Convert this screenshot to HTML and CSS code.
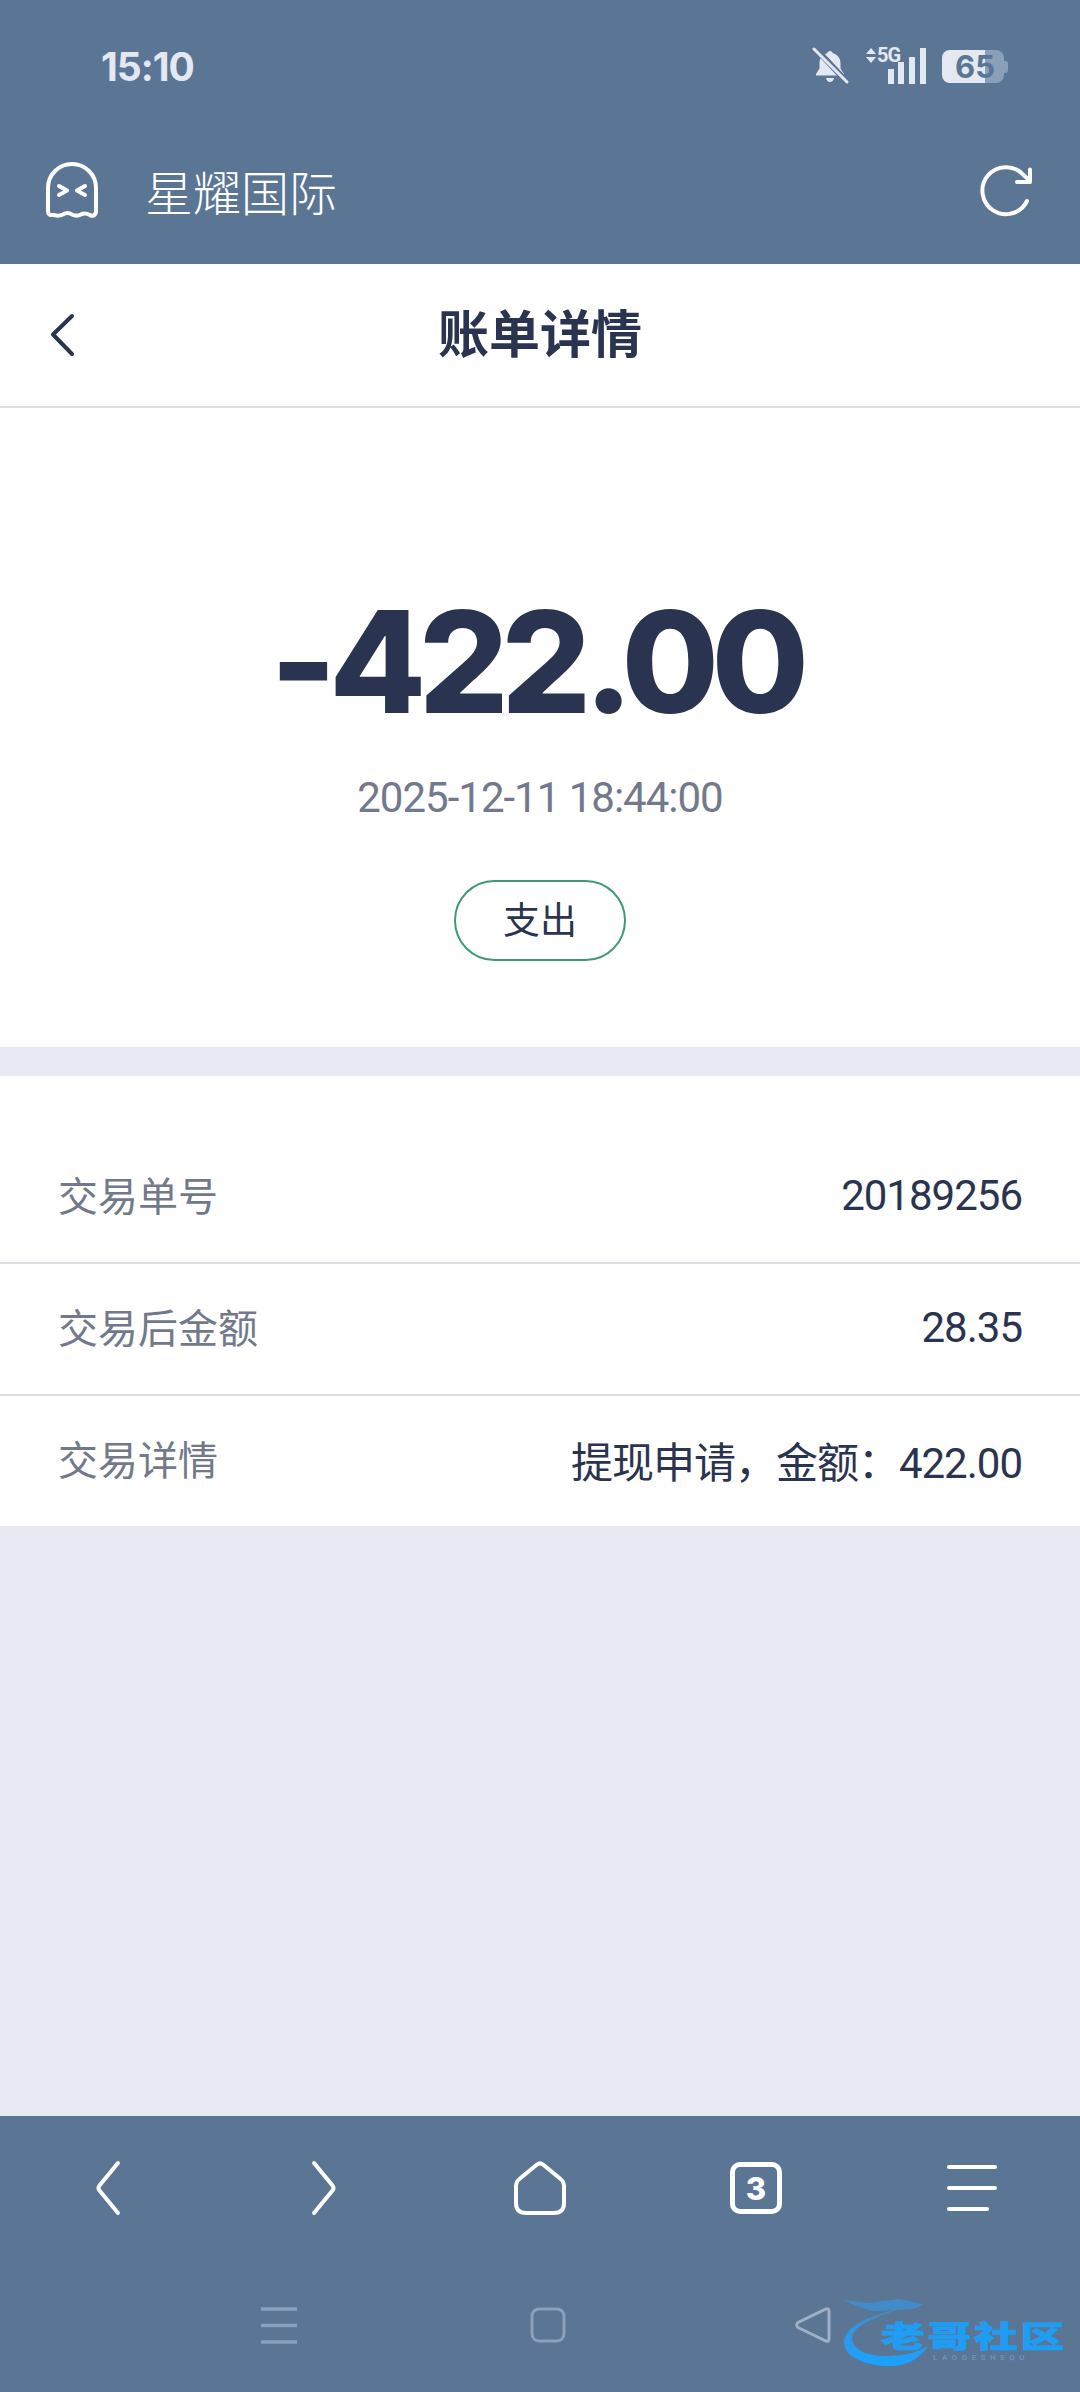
FILE: index.html
```html
<!DOCTYPE html>
<html lang="zh">
<head>
<meta charset="utf-8">
<title>账单详情</title>
<link rel="stylesheet" href="styles.css">
</head>
<body>
<div class="page">
  <header class="top">
    <div class="status">
      <span class="clock">15:10</span>
      <div class="status-icons">
        <svg class="bell" width="38" height="38" viewBox="0 0 38 38"><path d="M19 4c1.500 0 2.600 1 2.800 2.300 5 1.300 7.700 5 7.700 10.200v5l3.500 5.500v1.500H5v-1.500l3.500-5.500v-5c0-5.200 2.700-8.900 7.700-10.200C16.400 5 17.500 4 19 4z" fill="#e3e8f1"/><path d="M15 31h8c-.5 2.500-2 4-4 4s-3.500-1.500-4-4z" fill="#e3e8f1"/><path d="M4 1l33 35" stroke="#5b7595" stroke-width="6"/><path d="M3 2l33 33" stroke="#e3e8f1" stroke-width="3" stroke-linecap="round"/></svg>
        <div class="signal">
          <svg class="arrows" width="12" height="15" viewBox="0 0 12 15"><path d="M6 0l5 6H1zM6 15l5-6H1z" fill="#e3e8f1"/></svg>
          <span class="fiveg">5G</span>
          <span class="bar bar1"></span><span class="bar bar2"></span><span class="bar bar3"></span><span class="bar bar4"></span>
        </div>
        <div class="battery"><span class="battery-level"></span><span class="battery-tip"></span><span class="battery-num">65</span></div>
      </div>
    </div>
    <div class="appbar">
      <svg class="ghost" width="56" height="60" viewBox="0 0 56 60"><path d="M4 50V27A24 24 0 0 1 52 27v23c0 4-3 6-6 4-3-1.500-6-2.500-9-.5-3 1.500-6 1.500-9 0-3-2-6-2-9 0-3 1.500-6 1.500-9 .5C5 54.500 4 53 4 50z" fill="none" stroke="#fff" stroke-width="4" stroke-linejoin="round"/><path d="M15 25l8 4.500-8 4.500M41 25l-8 4.500 8 4.500" fill="none" stroke="#fff" stroke-width="4" stroke-linecap="round" stroke-linejoin="round"/></svg>
      <span class="appname">星耀国际</span>
      <svg class="reload" width="54" height="54" viewBox="0 0 54 54"><path d="M47 37A23.500 23.500 0 1 1 43 10.500L48 15" fill="none" stroke="#fff" stroke-width="4" stroke-linecap="round"/><path d="M50 5.500v12.500H37" fill="none" stroke="#fff" stroke-width="4" stroke-linecap="round" stroke-linejoin="round"/></svg>
    </div>
  </header>

  <nav class="titlebar">
    <svg class="back" width="28" height="44" viewBox="0 0 28 44"><path d="M23 3L4 21.500 23 41" fill="none" stroke="#2a3450" stroke-width="4" stroke-linecap="round" stroke-linejoin="round"/></svg>
    <h1 class="title">账单详情</h1>
  </nav>

  <section class="hero">
    <div class="amount">-422.00</div>
    <div class="time">2025-12-11 18:44:00</div>
    <div class="tag">支出</div>
  </section>

  <section class="list">
    <div class="row"><span class="label">交易单号</span><span class="value">20189256</span></div>
    <div class="row"><span class="label">交易后金额</span><span class="value">28.35</span></div>
    <div class="row"><span class="label">交易详情</span><span class="value">提现申请，金额：422.00</span></div>
  </section>

  <div class="spacer"></div>

  <footer class="bottom">
    <div class="toolbar">
      <svg width="30" height="56" viewBox="0 0 30 56"><path d="M25 3L6.500 25.500q-2 2.500 0 5L25 53" fill="none" stroke="#fff" stroke-width="4" stroke-linecap="round"/></svg>
      <svg width="30" height="56" viewBox="0 0 30 56"><path d="M5 3l18.500 22.500q2 2.500 0 5L5 53" fill="none" stroke="#fff" stroke-width="4" stroke-linecap="round"/></svg>
      <svg width="52" height="54" viewBox="0 0 52 54"><path d="M23 3.500q3-2.300 6 0l17 14q4 3 4 7.500V42q0 10-10 10H12Q2 52 2 42V25q0-4.500 4-7.500z" fill="none" stroke="#fff" stroke-width="4"/></svg>
      <div class="tabs">3</div>
      <svg width="50" height="48" viewBox="0 0 50 48"><path d="M2 3h46M2 24h46M2 45h38" fill="none" stroke="#fff" stroke-width="4" stroke-linecap="round"/></svg>
    </div>
    <div class="sysnav">
      <svg width="38" height="38" viewBox="0 0 38 38"><path d="M1 3h36M1 19.500h36M1 36h36" stroke="#8ba0ba" stroke-width="3.500" fill="none"/></svg>
      <svg width="36" height="36" viewBox="0 0 36 36"><rect x="2" y="2" width="32" height="32" rx="7" fill="none" stroke="#8ba0ba" stroke-width="3"/></svg>
      <svg class="sys-back" width="38" height="38" viewBox="0 0 38 38"><path d="M5 16.500a3 3 0 0 0 0 5L33 35q3 1 3-2V5q0-3-3-2z" fill="none" stroke="#9db0c6" stroke-width="3"/></svg>
    </div>
    <div class="mark">
      <svg class="mark-arc" width="100" height="74" viewBox="0 0 100 74"><defs><linearGradient id="markfade" x1="0" y1="0" x2="0" y2="1"><stop offset="0" stop-color="#3d8fd2"/><stop offset="1" stop-color="#1aa3ff"/></linearGradient></defs><path d="M3 4l26 3 30-4 24 5-9 5-16 1-26 1-18-6z" fill="#3d8fd2" opacity=".85"/><path d="M60 13C26 20 4 32 4 46c0 16 24 24 46 24 16 0 30-7 38-20-13 8-28 10-43 10-20 0-33-8-33-18 0-10 16-19 48-29z" fill="url(#markfade)"/></svg>
      <span class="mark-text">老哥社区</span>
      <span class="mark-sub">LAOGESHEQU</span>
    </div>
  </footer>
</div>
</body>
</html>
```

FILE: styles.css
```css
* { box-sizing: border-box; }
html, body { margin: 0; padding: 0; }
body {
  font-family: "Roboto", "Noto Sans CJK SC", sans-serif;
  background: #e7eaf3;
}
.page {
  width: 1080px;
  height: 2392px;
  display: flex;
  flex-direction: column;
  overflow: hidden;
}
.top {
  height: 264px;
  background: #5b7595;
  display: flex;
  flex-direction: column;
}
.status {
  height: 132px;
  display: flex;
  align-items: center;
  justify-content: space-between;
  padding: 0 72px 0 101px;
}
.clock {
  font-family: "Inter", sans-serif;
  font-size: 39px;
  font-weight: 700;
  color: #e3e8f1;
  letter-spacing: -1px;
}
.status-icons { display: flex; align-items: flex-start; gap: 16px; }
.signal { position: relative; width: 61px; height: 36px; margin-top: 1px; }
.arrows { position: absolute; left: 0; top: 0; }
.fiveg {
  position: absolute; left: 12px; top: -6px;
  font: 700 20px/26px "Roboto", sans-serif;
  color: #e3e8f1;
  letter-spacing: -1px;
}
.bar { position: absolute; bottom: 0; width: 6px; background: #e3e8f1; }
.bar1 { left: 23px; height: 15px; }
.bar2 { left: 33px; height: 22px; }
.bar3 { left: 44px; height: 27px; }
.bar4 { left: 55px; height: 36px; }
.battery { position: relative; width: 66px; height: 33px; margin-top: 3px; }
.battery::before {
  content: "";
  position: absolute; inset: 0 4px 0 0;
  background: #8a9fba;
  border-radius: 8px;
}
.battery-level {
  position: absolute; left: 0; top: 0; width: 43px; height: 33px;
  background: #e3e8f1;
  border-radius: 8px 0 0 8px;
}
.battery-tip {
  position: absolute; right: 0; top: 11px; width: 4px; height: 12px;
  background: #8a9fba;
  border-radius: 0 3px 3px 0;
}
.battery-num {
  position: absolute; left: 13px; top: 0;
  font: 700 31px/33px "Inter", sans-serif;
  color: #5b7595;
}
.appbar {
  height: 124px;
  display: flex;
  align-items: center;
  padding: 0 0 6px 44px;
}
.appname {
  font-size: 48px;
  font-weight: 300;
  font-family: "Noto Sans CJK SC", sans-serif;
  color: #fff;
  margin: 0 0 2px 45px;
}
.reload { margin-left: auto; margin-right: 46px; }
.titlebar {
  height: 144px;
  padding-bottom: 8px;
  background: #fff;
  border-bottom: 2px solid #dcdee3;
  display: flex;
  align-items: center;
  justify-content: center;
  position: relative;
}
.back { position: absolute; left: 49px; top: 49px; }
.title {
  margin: 0;
  font: 700 51px/1 "Noto Sans CJK SC", sans-serif;
  color: #2a3450;
}
.hero {
  height: 639px;
  background: #fff;
  display: flex;
  flex-direction: column;
  align-items: center;
  padding-top: 164px;
}
.amount {
  font-family: "Inter", sans-serif;
  font-size: 141px;
  font-weight: 800;
  line-height: 180px;
  letter-spacing: -7.500px;
  margin-right: 8px;
  color: #2a3450;
}
.time {
  margin-top: 21px;
  font-size: 42px;
  line-height: 50px;
  color: #72798b;
  letter-spacing: -1px;
}
.tag {
  margin-top: 57px;
  width: 172px;
  height: 81px;
  padding-bottom: 4px;
  border: 2px solid #3f9a73;
  border-radius: 41px;
  display: flex;
  align-items: center;
  justify-content: center;
  font: 400 37px/1 "Noto Sans CJK SC", sans-serif;
  color: #2a3450;
}
.list {
  margin-top: 29px;
  background: #fff;
  padding-top: 56px;
}
.row {
  height: 132px;
  padding: 0 58px 6px;
  display: flex;
  align-items: center;
  justify-content: space-between;
  font-size: 40px;
  border-bottom: 2px solid #dcdee3;
}
.row:last-child { border-bottom: 0; height: 130px; }
.label {
  color: #72798b;
  font-family: "Noto Sans CJK SC", sans-serif;
  font-weight: 400;
}
.value {
  padding-top: 2px;
  color: #2a3450;
  font-family: "Roboto", "Noto Sans CJK SC", sans-serif;
  font-weight: 400;
  font-size: 42px;
  letter-spacing: -1px;
}
.spacer { flex: 1; }
.bottom {
  position: relative;
  height: 276px;
  background: #5b7595;
}
.toolbar {
  height: 142px;
  padding-top: 2px;
  display: grid;
  grid-template-columns: repeat(5, 216px);
  justify-items: center;
  align-items: center;
}
.tabs {
  width: 52px;
  height: 52px;
  border: 5px solid #fff;
  border-radius: 10px;
  display: flex;
  align-items: center;
  justify-content: center;
  font: 800 31px/1 "Inter", sans-serif;
  color: #fff;
}
.sysnav {
  display: flex;
  align-items: center;
  gap: 232px;
  padding: 48px 0 0 260px;
}
.sys-back { margin-left: -5px; }
.mark {
  position: absolute;
  left: 840px;
  top: 180px;
  width: 230px;
  height: 74px;
}
.mark-arc { position: absolute; left: 0; top: 0; }
.mark-text {
  position: absolute; left: 41px; top: 16px;
  font: 900 44px/44px "Noto Sans CJK SC", sans-serif;
  color: #1f9df2;
  -webkit-text-stroke: 1px #1f9df2;
  letter-spacing: 2.500px;
  white-space: nowrap;
  transform: scaleY(.68);
  transform-origin: center;
}
.mark-sub {
  position: absolute; left: 93px; top: 58px;
  font: 700 8px/1 "Roboto", sans-serif;
  letter-spacing: 4.500px;
  color: #6f9fd0;
  opacity: .7;
}
```
